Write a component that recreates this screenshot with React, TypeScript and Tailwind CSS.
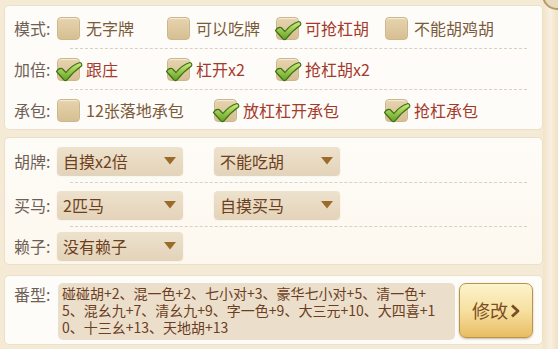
import React from 'react';

const font = { fontFamily: '"Noto Sans CJK SC", "Noto Sans", sans-serif' };

type Item = { text: string; checked?: boolean; width: string };

const rows: { label: string; items: Item[] }[] = [
  {
    label: '模式:',
    items: [
      { text: '无字牌', width: 'w-[110px]' },
      { text: '可以吃牌', width: 'w-[109px]' },
      { text: '可抢杠胡', checked: true, width: 'w-[109px]' },
      { text: '不能胡鸡胡', width: 'w-[120px]' }
    ]
  },
  {
    label: '加倍:',
    items: [
      { text: '跟庄', checked: true, width: 'w-[110px]' },
      { text: '杠开x2', checked: true, width: 'w-[109px]' },
      { text: '抢杠胡x2', checked: true, width: 'w-[109px]' }
    ]
  },
  {
    label: '承包:',
    items: [
      { text: '12张落地承包', width: 'w-[157px]' },
      { text: '放杠杠开承包', checked: true, width: 'w-[171px]' },
      { text: '抢杠承包', checked: true, width: 'w-[120px]' }
    ]
  }
];

function CheckMark() {
  return (
    <svg className="absolute -left-[2px] top-[3px]" width="28" height="21" viewBox="0 0 28 21">
      <defs>
        <linearGradient id="ck" x1="0" y1="0" x2="0" y2="1">
          <stop offset="0" stopColor="#cdee7a" />
          <stop offset="1" stopColor="#62a024" />
        </linearGradient>
      </defs>
      <path
        d="M1.5 10.5 Q3.5 7 7 7.5 L11 11.5 Q17 4 25 1.5 Q27.5 2.5 26.5 5 Q18.5 10.5 12 19 Q10 20.5 8.5 18.5 Z"
        fill="url(#ck)"
        stroke="#3f7018"
        strokeWidth="1.2"
        strokeLinejoin="round"
      />
    </svg>
  );
}

function Check({ text, checked, width }: Item) {
  return (
    <div className={`${width} flex items-center shrink-0`}>
      <div className="relative w-[23px] h-[23px] shrink-0">
        <div className="absolute inset-0 rounded-[4px] bg-gradient-to-b from-[#e6d3ad] to-[#d6bf93] border border-[#cdb68a] shadow-[inset_0_1px_1px_rgba(255,255,255,0.6)]" />
        {checked && <CheckMark />}
      </div>
      <span className={`ml-[6px] text-[16px] whitespace-nowrap ${checked ? 'text-[#a43a2c]' : 'text-[#7a5b3b]'}`}>
        {text}
      </span>
    </div>
  );
}

function Divider() {
  return <div className="ml-[56px] mr-[15px] border-t border-dashed border-[#d9d0c2]" />;
}

function Select({ text }: { text: string }) {
  return (
    <div className="w-[126px] h-[28px] rounded-[4px] bg-gradient-to-b from-[#eee2cd] to-[#e3d3b9] shadow-[0_1px_1px_rgba(160,130,90,0.35)] flex items-center justify-between pl-[6px] pr-[7px] shrink-0">
      <span className="text-[16px] text-[#6d3f20] whitespace-nowrap">{text}</span>
      <svg width="12" height="8" viewBox="0 0 12 8">
        <path d="M0 0 H12 L6 7.5 Z" fill="#9c6a2b" />
      </svg>
    </div>
  );
}

function SelectRow({ label, a, b, h }: { label: string; a: string; b?: string; h: string }) {
  return (
    <div className={`${h} flex items-center`}>
      <span className="w-[43px] text-[16px] text-[#6e6055]">{label}</span>
      <Select text={a} />
      {b && (
        <div className="ml-[31px]">
          <Select text={b} />
        </div>
      )}
    </div>
  );
}

export default function App() {
  return (
    <div className="w-[558px] h-[349px] bg-[#f4ead5] flex overflow-hidden relative" style={font}>
      <div className="w-[543px] pl-[4px] pt-[5px] flex flex-col">
        <div className="h-[125px] rounded-[5px] bg-[#fefcf8] border border-[#ece0c8] pt-[2px] pl-[9px]">
          {rows.map((r, i) => (
            <React.Fragment key={r.label}>
              {i > 0 && <Divider />}
              <div className="h-[40px] flex items-center">
                <span className="w-[43px] text-[16px] text-[#6e6055] shrink-0">{r.label}</span>
                {r.items.map((it) => (
                  <Check key={it.text} {...it} />
                ))}
              </div>
            </React.Fragment>
          ))}
        </div>

        <div className="mt-[7px] h-[128px] rounded-[5px] bg-gradient-to-b from-[#fefcf8] to-[#fdf8ee] border border-[#ece0c8] pt-[1px] pl-[9px]">
          <SelectRow label="胡牌:" a="自摸x2倍" b="不能吃胡" h="h-[43px]" />
          <Divider />
          <SelectRow label="买马:" a="2匹马" b="自摸买马" h="h-[43px]" />
          <Divider />
          <SelectRow label="赖子:" a="没有赖子" h="h-[38px]" />
        </div>

        <div className="mt-[10px] h-[70px] rounded-[5px] bg-[#fefcf8] border border-[#ece0c8] pt-[7px] pl-[9px] flex">
          <span className="w-[44px] text-[16px] text-[#6e6055] leading-[20px] mt-[1px] shrink-0">番型:</span>
          <div className="w-[397px] h-[57px] rounded-[5px] bg-[#ebdfcc] px-[4px] pt-[2px] text-[14px] leading-[17px] text-[#6b3e22] whitespace-nowrap overflow-hidden">
            <div className="h-[17px]">碰碰胡+2、混一色+2、七小对+3、豪华七小对+5、清一色+</div>
            <div className="h-[17px]">5、混幺九+7、清幺九+9、字一色+9、大三元+10、大四喜+1</div>
            <div className="h-[17px]">0、十三幺+13、天地胡+13</div>
          </div>
          <button className="ml-[4px] w-[74px] h-[55px] rounded-[7px] border border-[#b99348] bg-gradient-to-b from-[#fdf3cc] via-[#f7e0a0] to-[#e8bd62] shadow-[0_1px_2px_rgba(120,90,40,0.4)] flex items-center justify-center gap-[2px]">
            <span className="text-[18px] text-[#7a4d24]">修改</span>
            <svg width="10" height="14" viewBox="0 0 10 14">
              <path d="M2 1.5 L8 7 L2 12.5" fill="none" stroke="#7a4d24" strokeWidth="2.8" strokeLinejoin="round" />
            </svg>
          </button>
        </div>
      </div>
      <div className="flex-1 bg-gradient-to-r from-[#f1e4c9] via-[#f8f0df] to-[#efe1c4]" />
      <div className="absolute -right-[14px] -top-[20px] w-[30px] h-[30px] rounded-full border-[2px] border-[#b89a6a] bg-[#e9dbbd]" />
    </div>
  );
}
